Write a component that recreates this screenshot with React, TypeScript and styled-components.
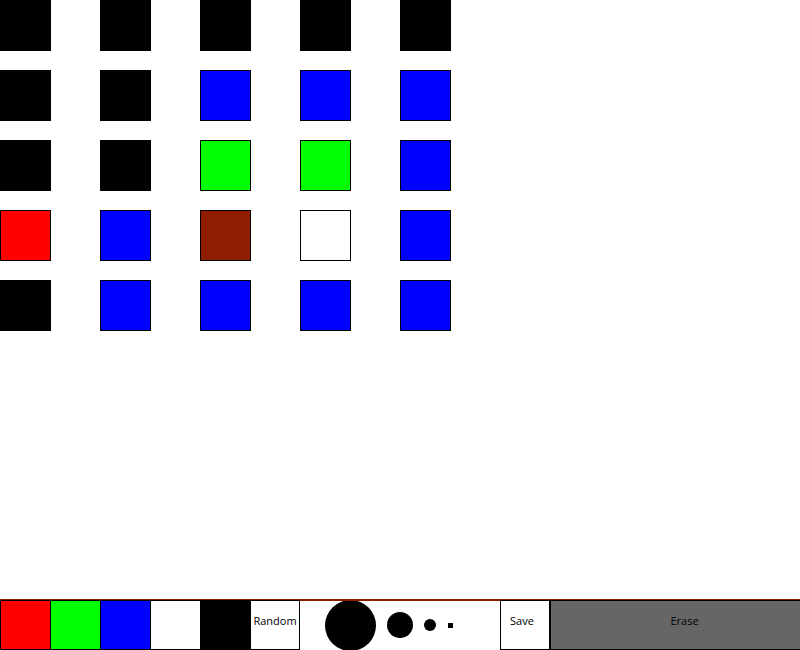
import styled, { createGlobalStyle } from "styled-components";

const GlobalStyle = createGlobalStyle`
  html, body {
    margin: 0;
    padding: 0;
    background: #ffffff;
    overflow: hidden;
  }
  body {
    font-family: "Open Sans", "DejaVu Sans", sans-serif;
  }
`;

const SELECTED = "#8f1e00";

const Page = styled.div(() => ({
  width: 800,
  height: 650,
  display: "flex",
  flexDirection: "column",
}));

const Board = styled.div(() => ({
  display: "grid",
  gridTemplateColumns: "repeat(5, 51px)",
  gridAutoRows: 51,
  columnGap: 49,
  rowGap: 19,
}));

const Cell = styled.div<{ $fill: string }>(({ $fill }) => ({
  boxSizing: "border-box",
  width: 51,
  height: 51,
  backgroundColor: $fill,
  border: "1px solid #000",
}));

const Toolbar = styled.div(() => ({
  marginTop: "auto",
  height: 51,
  display: "flex",
  borderTop: `1px solid ${SELECTED}`,
  boxSizing: "border-box",
  width: 800,
  overflow: "hidden",
}));

const Swatch = styled.button<{ $fill: string }>(({ $fill }) => ({
  boxSizing: "border-box",
  width: 50,
  height: 50,
  flexShrink: 0,
  padding: 0,
  margin: 0,
  backgroundColor: $fill,
  border: "1px solid #000",
  borderRightWidth: 0,
}));

const TextButton = styled.button<{ $bg?: string; $grow?: boolean; $nudge?: number }>(
  ({ $bg, $grow, $nudge = 0 }) => ({
    boxSizing: "border-box",
    width: $grow ? 270 : 50,
    flexShrink: 0,
    height: 50,
    margin: 0,
    padding: `0 ${$nudge}px 9px 0`,
    backgroundColor: $bg ?? "#fff",
    border: "1px solid #000",
    borderRightWidth: $grow ? 0 : 1,
    fontFamily: '"Open Sans", "DejaVu Sans", sans-serif',
    fontSize: 11,
    color: "#000",
    display: "flex",
    alignItems: "center",
    justifyContent: "center",
  })
);

const Brushes = styled.div(() => ({
  boxSizing: "border-box",
  width: 200,
  height: 50,
  flexShrink: 0,
  borderTop: `1px solid ${SELECTED}`,
  backgroundColor: "#fff",
  overflow: "hidden",
}));

const board = [
  ["#000", "#000", "#000", "#000", "#000"],
  ["#000", "#000", "#00f", "#00f", "#00f"],
  ["#000", "#000", "#0f0", "#0f0", "#00f"],
  ["#f00", "#00f", SELECTED, "#fff", "#00f"],
  ["#000", "#00f", "#00f", "#00f", "#00f"],
];

const palette = ["#f00", "#0f0", "#00f", "#fff", "#000"];

const App = () => {
  return (
    <>
      <GlobalStyle />
      <Page>
        <Board>
          {board.flat().map((c, i) => (
            <Cell key={i} $fill={c} />
          ))}
        </Board>
        <Toolbar>
          {palette.map((c) => (
            <Swatch key={c} $fill={c} />
          ))}
          <TextButton>Random</TextButton>
          <Brushes>
            <svg width="200" height="49" viewBox="0 1 200 49">
              <circle cx="50.5" cy="25.5" r="25.5" fill="#000" />
              <circle cx="100" cy="25" r="13" fill="#000" />
              <circle cx="130" cy="25" r="6" fill="#000" />
              <rect x="148" y="23" width="5" height="5" fill="#000" />
            </svg>
          </Brushes>
          <TextButton $nudge={6}>Save</TextButton>
          <TextButton $bg="#666" $grow $nudge={2}>
            Erase
          </TextButton>
        </Toolbar>
      </Page>
    </>
  );
};

export default App;
